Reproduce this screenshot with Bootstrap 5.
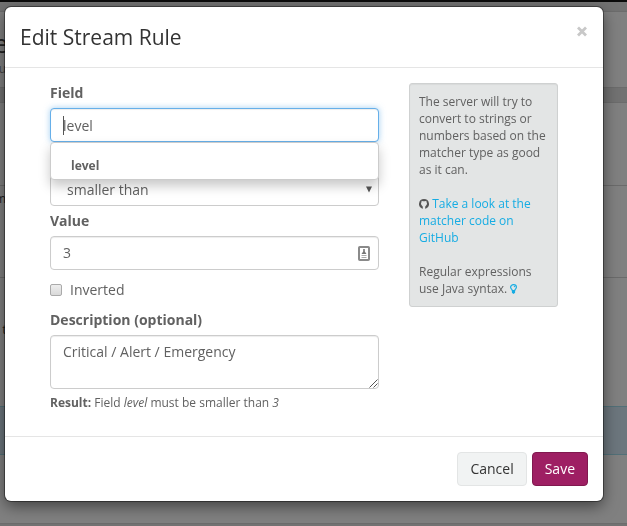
<!DOCTYPE html>
<html lang="en">
<head>
<meta charset="utf-8">
<title>Edit Stream Rule</title>
<link href="https://cdn.jsdelivr.net/npm/bootstrap@5.3.0/dist/css/bootstrap.min.css" rel="stylesheet">
<style>
body{font:14px/20px "Open Sans",sans-serif;color:#616161;background:#727272;height:526px}
.topbar{height:2px;background:#0b0b0b}
.panel-box{background:#808080;border:solid #6c6c6c;border-width:1px 0}
.panel-head{height:77px;margin-top:9px}
.panel-main{height:422px;margin-top:14px}
.behind{margin-left:-6px;color:#222;white-space:nowrap;width:14px;overflow:hidden;direction:rtl}
.behind-title{font-size:25px;line-height:34px;padding-top:14px}
.behind-sub{font-size:12px;line-height:18px;color:#444;width:12px}
.behind-m{padding-top:3px;font-size:12px;width:12px}
.behind-t{padding-top:41px;font-size:13px;width:13px}
.row-a{height:83px}
.row-b{height:92px}
.row-c{height:128px}
.stream-row{border-bottom:1px solid #6b6b6b}
.highlight-row{height:49px;background:#6c767d;border:solid #527078;border-width:1px 0}
.modal-dialog{width:598px;max-width:none;margin:7px 0 0 5px}
.modal-content{border:0;border-radius:6px;color:#616161;height:494px;box-shadow:0 0 0 1px rgba(0,0,0,.4),0 5px 15px rgba(0,0,0,.5)}
.modal-header{height:61px;padding:0 15px;border-color:#e5e5e5}
.modal-title{font-size:21px;line-height:24px;color:#333;font-weight:400;margin-top:-1px}
.close-x{border:0;background:none;padding:0;margin-bottom:13px;line-height:12px}
.modal-body{padding:15px 45px 0;height:368px}
.form-col{width:329px}
.field-label{font-weight:700;display:block;line-height:20px;margin-bottom:5px}
.field-value{padding-top:5px}
.form-control{height:34px;padding:6px 12px;font-size:14px;line-height:20px;color:#616161;border:1px solid #ccc;border-radius:4px;box-shadow:inset 0 1px 1px rgba(0,0,0,.075)}
.is-active{border-color:#66afe9;box-shadow:inset 0 1px 1px rgba(0,0,0,.075),0 0 6px rgba(102,175,233,.6)}
.caret-line{left:13px;top:8px;width:1px;height:19px;background:#555}
.suggest{left:0;top:34px;width:329px;height:38px;background:#fff;border:1px solid #ccc;border-radius:4px;box-shadow:0 6px 12px rgba(0,0,0,.22);z-index:2;padding:12px 20px 0;font-size:12px;line-height:22px;font-weight:700}
.type-select{margin-top:30px;padding:7px 6px 5px 16px}
.select-arrow{margin-top:6px}
.check-row{height:20px;margin:10px 0}
.check-text{margin-left:8px}
.check-box{width:12px;height:12px;border:1px solid #aaa;border-radius:2px;background:linear-gradient(#eee,#d9d9d9)}
textarea.form-control{height:54px;resize:none}
.grip{right:1px;bottom:1px}
.result-line{font-size:12px;line-height:17px;margin-top:5px}
.help-well{width:149px;height:224px;background:#e3e5e5;border:1px solid #cfd1d1;border-radius:3px;box-shadow:inset 0 1px 1px rgba(0,0,0,.05);padding:9px;font-size:12px;line-height:17px}
.help-well a{color:#16ace3;text-decoration:none}
.help-well p{margin:0 -4px 17px 0}
.help-well svg{vertical-align:-1px}
.modal-footer{height:65px;padding:0 15px;border-color:#e5e5e5;gap:5px}
.modal-footer .btn{margin:0;height:34px;padding:6px 12px;font-size:14px;line-height:20px;border-radius:4px}
.modal-footer .btn-cancel{background:#f1f3f3;border-color:#e3e5e5;color:#333}
.modal-footer .btn-save{background:#9e1f63;border-color:#81194f;color:#fff}
</style>
<script src="https://cdn.jsdelivr.net/npm/bootstrap@5.3.0/dist/js/bootstrap.bundle.min.js"></script>
</head>
<body class="overflow-hidden">
<div class="topbar"></div>
<div class="panel-box panel-head">
  <div class="behind behind-title">e</div>
  <div class="behind behind-sub">u</div>
</div>
<div class="panel-box panel-main d-flex flex-column">
  <div class="stream-row row-a"></div>
  <div class="stream-row row-b"><div class="behind behind-m">m</div></div>
  <div class="row-c"><div class="behind behind-t">t</div></div>
  <div class="highlight-row"></div>
</div>
<div class="modal d-block" tabindex="-1">
  <div class="modal-dialog">
    <div class="modal-content">
      <div class="modal-header">
        <h4 class="modal-title">Edit Stream Rule</h4>
        <button type="button" class="close-x ms-auto" aria-label="Close"><svg width="12" height="11" viewBox="0 0 12 11"><path d="M2 1.500l8 8M10 1.500l-8 8" stroke="#c8c8c8" stroke-width="2.800"/></svg></button>
      </div>
      <div class="modal-body d-flex justify-content-between align-items-start flex-grow-0">
        <form class="form-col">
          <label class="field-label">Field</label>
          <div class="position-relative">
            <input class="form-control is-active" value="level">
            <span class="caret-line position-absolute"></span>
            <div class="suggest position-absolute">level</div>
          </div>
          <div class="form-control type-select d-flex justify-content-between">
            <span>smaller than</span>
            <svg class="select-arrow" width="6" height="7" viewBox="0 0 6 7"><path d="M0 .5h6L3 6.500z" fill="#555"/></svg>
          </div>
          <label class="field-label field-value">Value</label>
          <div class="form-control d-flex justify-content-between align-items-center pe-2">
            <span>3</span>
            <svg width="12" height="15" viewBox="0 0 12 15"><rect x="1" y="1" width="10" height="13" rx=".8" fill="#fff" stroke="#8a8a8a" stroke-width="2"/><path d="M5.200 3h1.600v2.500L8.500 8h-5l1.700-2.500z" fill="#777"/><path d="M3.500 9.500h5M3.500 11.500h5" stroke="#aaa"/></svg>
          </div>
          <div class="d-flex align-items-center check-row"><span class="check-box"></span><span class="check-text">Inverted</span></div>
          <label class="field-label">Description (optional)</label>
          <div class="position-relative d-flex">
            <textarea class="form-control">Critical / Alert / Emergency</textarea>
            <svg class="grip position-absolute" width="9" height="9" viewBox="0 0 9 9"><path d="M.5 8.500l8-8M4.500 8.500l4-4" stroke="#555" fill="none"/></svg>
          </div>
          <div class="result-line"><b>Result:</b> Field <em>level</em> must be smaller than <em>3</em></div>
        </form>
        <aside class="help-well">
          <p>The server will try to convert to strings or numbers based on the matcher type as good as it can.</p>
          <p><svg width="10" height="10" viewBox="0 0 10 10"><path fill="#555" d="M5 0a5 5 0 0 0-1.700 9.700c.4.100.5-.1.500-.4v-1.600C3.800 7.200 2 6.400 2 4.600c0-.6.200-1 .5-1.400l.1-1.500 1.400.6h2l1.400-.6.100 1.500c.3.400.5.800.5 1.400 0 1.800-1.800 2.600-1.800 3.100v1.600c0 .3.100.5.500.4A5 5 0 0 0 5 0z"/></svg> <a href="#">Take a look at the matcher code on GitHub</a></p>
          <p class="mb-0">Regular expressions use Java syntax. <a href="#" aria-label="Java syntax"><svg width="7" height="10" viewBox="0 0 7 10"><path d="M2.300 6.500C2.300 5.200.6 4.800.6 3.200a2.900 2.600 0 0 1 5.800 0c0 1.600-1.700 2-1.700 3.300z" fill="none" stroke="#16ace3" stroke-width="1.200"/><path d="M1.900 6.500h3.200v2.300L3.500 10 1.900 8.800zM3.500 1.900l1.500.2v1.300z" fill="#16ace3"/></svg></a></p>
        </aside>
      </div>
      <div class="modal-footer">
        <button class="btn btn-cancel">Cancel</button>
        <button class="btn btn-save">Save</button>
      </div>
    </div>
  </div>
</div>
</body>
</html>
